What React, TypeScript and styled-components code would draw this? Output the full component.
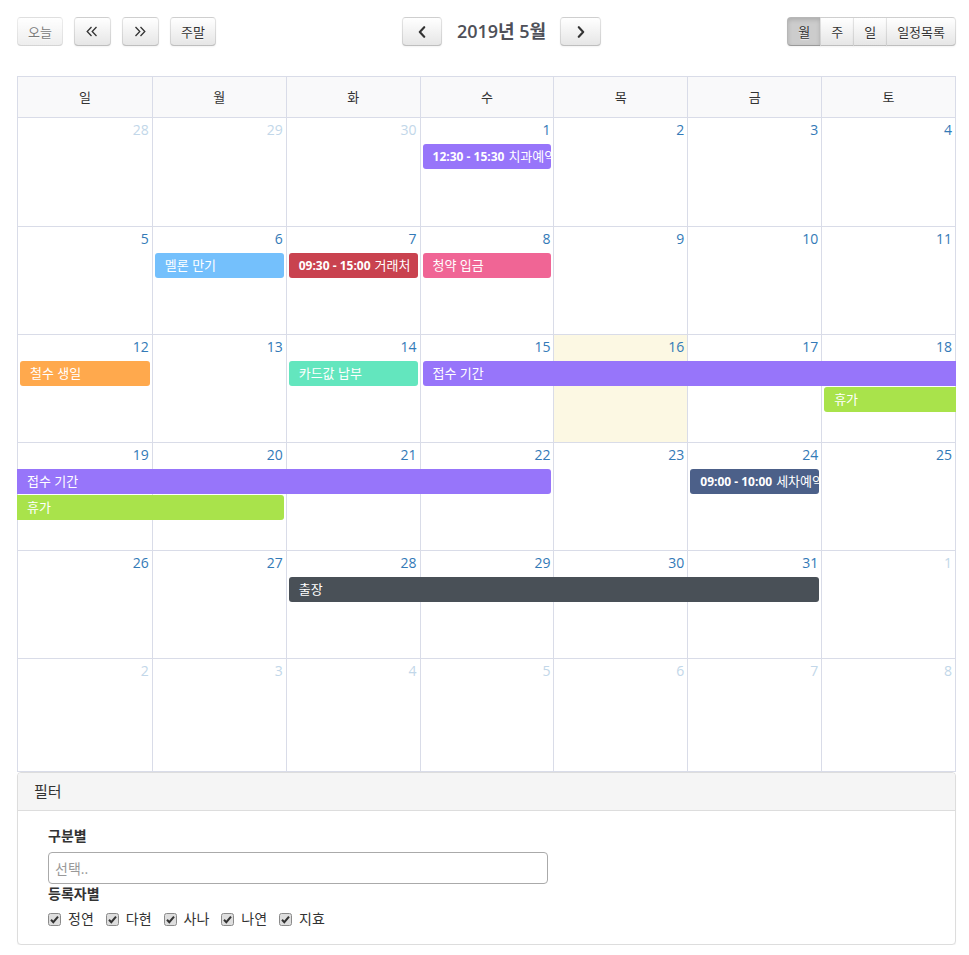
import React from "react";
import styled, { createGlobalStyle, css } from "styled-components";

const LINE = "#d9dce8";

const GlobalStyle = createGlobalStyle`
  html, body { margin: 0; padding: 0; background: #fff; }
  body {
    font-family: "Open Sans", "Noto Sans CJK KR", sans-serif;
    color: #333;
    font-size: 14px;
  }
  * { box-sizing: border-box; }
`;

const Page = styled.div`
  padding: 17px 13px 0 17px;
`;

const Toolbar = styled.div`
  display: flex;
  justify-content: space-between;
  align-items: center;
  height: 29px;
  margin-bottom: 30px;
`;

const Group = styled.div<{ $gap?: number }>`
  display: flex;
  align-items: center;
  gap: ${(p) => p.$gap ?? 0}px;
`;

const Button = styled.button<{
  $w?: number;
  $active?: boolean;
  $pos?: "single" | "first" | "mid" | "last";
}>`
  height: 29px;
  ${(p) => (p.$w ? `width: ${p.$w}px; padding: 0;` : "padding: 0 10px;")}
  display: inline-flex;
  align-items: center;
  justify-content: center;
  font-family: "Open Sans", "Noto Sans CJK KR", sans-serif;
  font-size: 13px;
  color: #333;
  background-color: #f5f5f5;
  background-image: linear-gradient(to bottom, #ffffff, #e6e6e6);
  border: 1px solid;
  border-color: rgba(0, 0, 0, 0.1) rgba(0, 0, 0, 0.1) rgba(0, 0, 0, 0.25);
  text-shadow: 0 1px 1px rgba(255, 255, 255, 0.75);
  box-shadow: inset 0 1px 0 rgba(255, 255, 255, 0.2), 0 1px 2px rgba(0, 0, 0, 0.05);
  border-radius: ${(p) =>
    p.$pos === "first"
      ? "4px 0 0 4px"
      : p.$pos === "mid"
      ? "0"
      : p.$pos === "last"
      ? "0 4px 4px 0"
      : "4px"};
  ${(p) => (p.$pos === "mid" || p.$pos === "last" ? "margin-left: -1px;" : "")}
  ${(p) =>
    p.$active &&
    css`
      background-color: #cccccc;
      background-image: none;
      box-shadow: inset 0 2px 4px rgba(0, 0, 0, 0.15), 0 1px 2px rgba(0, 0, 0, 0.05);
    `}
  &:disabled {
    opacity: 0.65;
    box-shadow: none;
    color: #333;
  }
`;

const Title = styled.h2`
  margin: 0 14px 0 15px;
  font-size: 18px;
  font-weight: 600;
  color: #4e5058;
  line-height: 29px;
  white-space: nowrap;
`;

const Calendar = styled.div`
  border: 1px solid ${LINE};
  border-bottom: 0;
`;

const HeadRow = styled.div`
  display: grid;
  grid-template-columns: repeat(7, 1fr);
  height: 41px;
  border-bottom: 1px solid ${LINE};
  background: #f9f9fa;
`;

const HeadCell = styled.div<{ $first?: boolean }>`
  ${(p) => (p.$first ? "" : `border-left: 1px solid ${LINE};`)}
  text-align: center;
  line-height: 40px;
  font-size: 13px;
  color: #333;
`;

const Week = styled.div<{ $h: number }>`
  display: grid;
  grid-template-columns: repeat(7, 1fr);
  grid-template-rows: 25px 26px 26px 1fr;
  height: ${(p) => p.$h}px;
  border-bottom: 1px solid ${LINE};
`;

const DayBg = styled.div<{ $col: number; $today?: boolean }>`
  grid-row: 1 / -1;
  grid-column: ${(p) => p.$col + 1};
  ${(p) => (p.$col > 0 ? `border-left: 1px solid ${LINE};` : "")}
  background: ${(p) => (p.$today ? "#fcf8e3" : "transparent")};
`;

const DayNum = styled.div<{ $col: number; $other?: boolean }>`
  grid-row: 1;
  grid-column: ${(p) => p.$col + 1};
  text-align: right;
  padding: 2px 3px 0 0;
  font-size: 14px;
  line-height: 20px;
  color: ${(p) => (p.$other ? "#c2d7e9" : "#337ab7")};
`;

const Event = styled.div<{
  $color: string;
  $start: number;
  $span: number;
  $lane: number;
  $contL?: boolean;
  $contR?: boolean;
}>`
  grid-row: ${(p) => p.$lane + 2};
  grid-column: ${(p) => p.$start + 1} / span ${(p) => p.$span};
  align-self: start;
  margin-top: 1px;
  margin-left: ${(p) => (p.$contL ? -1 : p.$start === 0 ? 2 : 3)}px;
  margin-right: ${(p) => (p.$contR ? -1 : 2)}px;
  height: 25px;
  line-height: 25px;
  padding: 0 10px;
  background: ${(p) => p.$color};
  color: #fff;
  font-size: 13px;
  white-space: nowrap;
  overflow: hidden;
  border-radius: ${(p) =>
    `${p.$contL ? 0 : 3}px ${p.$contR ? 0 : 3}px ${p.$contR ? 0 : 3}px ${p.$contL ? 0 : 3}px`};
  position: relative;
  z-index: 1;
`;

const EvTime = styled.span`
  font-weight: 700;
  font-size: 12px;
  margin-right: 4px;
`;

const Panel = styled.div`
  border: 1px solid #dddddd;
  border-radius: 4px;
  box-shadow: 0 1px 1px rgba(0, 0, 0, 0.05);
  background: #fff;
`;

const PanelHeading = styled.div`
  height: 38px;
  line-height: 37px;
  padding: 0 16px;
  background: #f5f5f5;
  border-bottom: 1px solid #dddddd;
  border-radius: 3px 3px 0 0;
  font-size: 15px;
  color: #333;
`;

const PanelBody = styled.div`
  padding: 15px 30px 15px;
`;

const FieldLabel = styled.div<{ $mb?: number }>`
  font-weight: 700;
  font-size: 14px;
  line-height: 20px;
  color: #333;
  margin-bottom: ${(p) => p.$mb ?? 0}px;
`;

const Select = styled.input`
  display: block;
  width: 500px;
  height: 32px;
  border: 1px solid #aaaaaa;
  border-radius: 4px;
  padding: 0 6px;
  font-family: "Open Sans", "Noto Sans CJK KR", sans-serif;
  font-size: 14px;
  color: #444;
  outline: none;
  &::placeholder {
    color: #999;
  }
`;

const CheckRow = styled.div`
  display: flex;
  align-items: center;
  margin-top: 5px;
  height: 20px;
`;

const CheckLabel = styled.label`
  display: inline-flex;
  align-items: center;
  gap: 7px;
  margin-right: 12px;
  font-size: 14px;
  line-height: 20px;
  color: #333;
`;

const Box = styled.span`
  display: inline-flex;
  width: 13px;
  height: 13px;
`;

const ChevronLeft = () => (
  <svg width="8" height="12" viewBox="0 0 8 12">
    <path d="M6.2 1.2 L1.8 6 L6.2 10.8" fill="none" stroke="#333" strokeWidth="2.1" strokeLinecap="round" strokeLinejoin="round" />
  </svg>
);
const ChevronRight = () => (
  <svg width="8" height="12" viewBox="0 0 8 12">
    <path d="M1.8 1.2 L6.2 6 L1.8 10.8" fill="none" stroke="#333" strokeWidth="2.1" strokeLinecap="round" strokeLinejoin="round" />
  </svg>
);
const DoubleLeft = () => (
  <svg width="12" height="11" viewBox="0 0 12 11">
    <path d="M5.5 1 L1.2 5.5 L5.5 10 M10.5 1 L6.2 5.5 L10.5 10" fill="none" stroke="#333" strokeWidth="1.3" />
  </svg>
);
const DoubleRight = () => (
  <svg width="12" height="11" viewBox="0 0 12 11">
    <path d="M1.5 1 L5.8 5.5 L1.5 10 M6.5 1 L10.8 5.5 L6.5 10" fill="none" stroke="#333" strokeWidth="1.3" />
  </svg>
);

const CheckIcon = () => (
  <svg width="13" height="13" viewBox="0 0 13 13">
    <rect x="0.5" y="0.5" width="12" height="12" rx="2" fill="#dedede" stroke="#8a8a8a" />
    <path d="M3 6.8 L5.3 9.2 L10 3.6" fill="none" stroke="#333" strokeWidth="2" />
  </svg>
);

type Ev = {
  title: string;
  time?: string;
  color: string;
  start: number;
  span?: number;
  lane?: number;
  contL?: boolean;
  contR?: boolean;
};

type WeekData = {
  days: number[];
  other: number[];
  height: number;
  today?: number;
  events: Ev[];
};

const weeks: WeekData[] = [
  {
    days: [28, 29, 30, 1, 2, 3, 4],
    other: [0, 1, 2],
    height: 109,
    events: [{ time: "12:30 - 15:30", title: "치과예약", color: "#9775fa", start: 3 }],
  },
  {
    days: [5, 6, 7, 8, 9, 10, 11],
    other: [],
    height: 108,
    events: [
      { title: "멜론 만기", color: "#74c0fc", start: 1 },
      { time: "09:30 - 15:00", title: "거래처", color: "#c9424f", start: 2 },
      { title: "청약 입금", color: "#f06595", start: 3 },
    ],
  },
  {
    days: [12, 13, 14, 15, 16, 17, 18],
    other: [],
    height: 108,
    today: 4,
    events: [
      { title: "철수 생일", color: "#ffa94d", start: 0 },
      { title: "카드값 납부", color: "#63e6be", start: 2 },
      { title: "접수 기간", color: "#9775fa", start: 3, span: 4, contR: true },
      { title: "휴가", color: "#a9e34b", start: 6, lane: 1, contR: true },
    ],
  },
  {
    days: [19, 20, 21, 22, 23, 24, 25],
    other: [],
    height: 108,
    events: [
      { title: "접수 기간", color: "#9775fa", start: 0, span: 4, contL: true },
      { title: "휴가", color: "#a9e34b", start: 0, span: 2, lane: 1, contL: true },
      { time: "09:00 - 10:00", title: "세차예약", color: "#4c6089", start: 5 },
    ],
  },
  {
    days: [26, 27, 28, 29, 30, 31, 1],
    other: [6],
    height: 108,
    events: [{ title: "출장", color: "#495057", start: 2, span: 4 }],
  },
  {
    days: [2, 3, 4, 5, 6, 7, 8],
    other: [0, 1, 2, 3, 4, 5, 6],
    height: 113,
    events: [],
  },
];

const dayNames = ["일", "월", "화", "수", "목", "금", "토"];
const members = ["정연", "다현", "사나", "나연", "지효"];

export default function App() {
  return (
    <>
      <GlobalStyle />
      <Page>
        <Toolbar>
          <Group $gap={11}>
            <Button disabled>오늘</Button>
            <Button $w={37}>
              <DoubleLeft />
            </Button>
            <Button $w={37}>
              <DoubleRight />
            </Button>
            <Button>주말</Button>
          </Group>
          <Group>
            <Button $w={40}>
              <ChevronLeft />
            </Button>
            <Title>2019년 5월</Title>
            <Button $w={41}>
              <ChevronRight />
            </Button>
          </Group>
          <Group>
            <Button $pos="first" $active>
              월
            </Button>
            <Button $pos="mid">주</Button>
            <Button $pos="mid">일</Button>
            <Button $pos="last">일정목록</Button>
          </Group>
        </Toolbar>

        <Calendar>
          <HeadRow>
            {dayNames.map((d, i) => (
              <HeadCell key={d} $first={i === 0}>
                {d}
              </HeadCell>
            ))}
          </HeadRow>
          {weeks.map((w, wi) => (
            <Week key={wi} $h={w.height}>
              {w.days.map((_, i) => (
                <DayBg key={`bg${i}`} $col={i} $today={w.today === i} />
              ))}
              {w.days.map((d, i) => (
                <DayNum key={`n${i}`} $col={i} $other={w.other.includes(i)}>
                  {d}
                </DayNum>
              ))}
              {w.events.map((e, ei) => (
                <Event
                  key={`e${ei}`}
                  $color={e.color}
                  $start={e.start}
                  $span={e.span ?? 1}
                  $lane={e.lane ?? 0}
                  $contL={e.contL}
                  $contR={e.contR}
                >
                  {e.time && <EvTime>{e.time}</EvTime>}
                  {e.title}
                </Event>
              ))}
            </Week>
          ))}
        </Calendar>

        <Panel>
          <PanelHeading>필터</PanelHeading>
          <PanelBody>
            <FieldLabel $mb={6}>구분별</FieldLabel>
            <Select placeholder="선택.." readOnly />
            <FieldLabel>등록자별</FieldLabel>
            <CheckRow>
              {members.map((m) => (
                <CheckLabel key={m}>
                  <Box>
                    <CheckIcon />
                  </Box>
                  {m}
                </CheckLabel>
              ))}
            </CheckRow>
          </PanelBody>
        </Panel>
      </Page>
    </>
  );
}
